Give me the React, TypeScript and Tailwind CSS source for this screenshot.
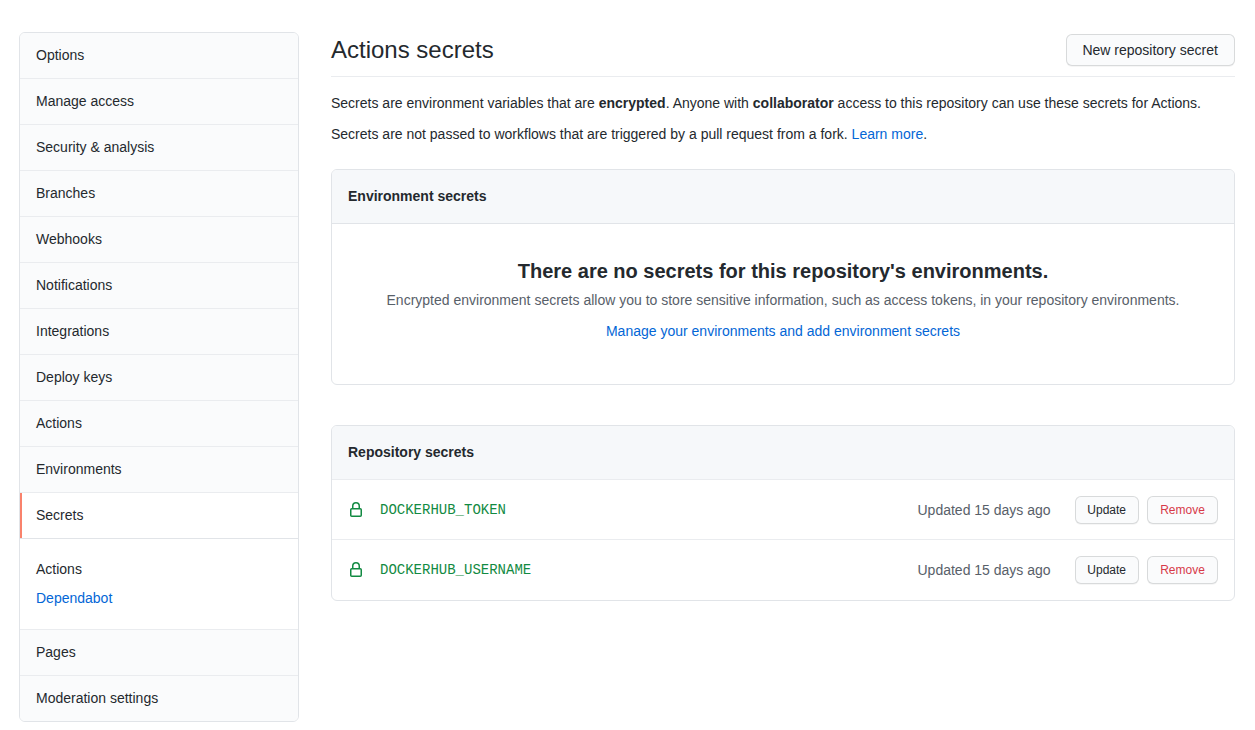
import React from "react";

const before = ["Options", "Manage access", "Security & analysis", "Branches", "Webhooks", "Notifications", "Integrations", "Deploy keys", "Actions", "Environments"];
const after = ["Pages", "Moderation settings"];
const secrets = ["DOCKERHUB_TOKEN", "DOCKERHUB_USERNAME"];

function MenuItem({ label }: { label: string }) {
  return (
    <a className="block h-[46px] border-b border-[#eaecef] bg-[#fafbfc] px-4 py-3 leading-[21px] last:h-[45px] last:border-b-0">{label}</a>
  );
}

function LockIcon() {
  return (
    <svg className="h-4 w-4 shrink-0 fill-[#128a42]" viewBox="0 0 16 16" aria-hidden="true">
      <path fillRule="evenodd" d="M4 4v2h-.25A1.75 1.75 0 002 7.75v5.5c0 .966.784 1.75 1.75 1.75h8.5A1.75 1.75 0 0014 13.25v-5.5A1.75 1.75 0 0012.25 6H12V4a4 4 0 10-8 0zm6.5 2V4a2.5 2.5 0 10-5 0v2h5zM12 7.5h.25a.25.25 0 01.25.25v5.5a.25.25 0 01-.25.25h-8.5a.25.25 0 01-.25-.25v-5.5a.25.25 0 01.25-.25H12z" />
    </svg>
  );
}

function SecretRow({ name }: { name: string }) {
  return (
    <li className="flex h-[60px] items-start border-t border-[#eaecef] px-4 pt-4 last:h-[61px]">
      <div className="flex h-7 items-center"><LockIcon /></div>
      <code className="ml-4 flex-1 pt-[3px] font-['Liberation_Mono',monospace] text-[14px] leading-[22px] text-[#128a42]">{name}</code>
      <span className="mr-[24.4px] pt-[4px] text-[14px] leading-[21px] text-[#586069]">Updated 15 days ago</span>
      <button className="mr-2 h-7 w-16 rounded-md border border-[#1b1f23]/15 bg-[#fafbfc] pr-[0.7px] text-xs shadow-[0_1px_0_rgba(27,31,35,0.04)]">Update</button>
      <button className="h-7 w-[71px] rounded-md border border-[#1b1f23]/15 bg-[#fafbfc] text-xs text-[#d73a49] shadow-[0_1px_0_rgba(27,31,35,0.04)]">Remove</button>
    </li>
  );
}

export default function App() {
  return (
    <div className="flex h-[730px] items-start gap-8 overflow-hidden bg-white pt-8 pr-5 pl-[19px] font-['Liberation_Sans',Arial,sans-serif] text-[14px] leading-[21px] text-[#24292e]">
      <nav className="w-[280px] shrink-0 overflow-hidden rounded-md border border-[#e1e4e8]">
        {before.map((label) => <MenuItem key={label} label={label} />)}
        <a className="flex h-[45px] bg-white"><span className="w-0.5 bg-[#f9826c]" /><span className="py-3 pl-[14px]">Secrets</span></a>
        <div className="h-[92px] border-y border-t-[#e1e4e8] border-b-[#eaecef] px-4 pt-5">
          <a className="mb-2 block">Actions</a>
          <a className="block text-[#0366d6]">Dependabot</a>
        </div>
        {after.map((label) => <MenuItem key={label} label={label} />)}
      </nav>
      <main className="min-w-0 flex-1">
        <header className="flex h-[45px] items-start justify-between border-b border-[#eaecef]">
          <h2 className="text-2xl leading-9">Actions secrets</h2>
          <button className="mt-[2px] h-8 w-[169px] rounded-md border border-[#1b1f23]/15 bg-[#fafbfc] pr-[0.7px] shadow-[0_1px_0_rgba(27,31,35,0.04)]">New repository secret</button>
        </header>
        <p className="mt-4">Secrets are environment variables that are <strong>encrypted</strong>. Anyone with <strong>collaborator</strong> access to this repository can use these secrets for Actions.</p>
        <p className="mt-[10px]">Secrets are not passed to workflows that are triggered by a pull request from a fork. <a className="text-[#0366d6]">Learn more</a>.</p>
        <section className="mt-6 h-[216px] overflow-hidden rounded-md border border-[#e1e4e8]">
          <h3 className="h-[54px] border-b border-[#e1e4e8] bg-[#f6f8fa] p-4 font-bold">Environment secrets</h3>
          <div className="pt-8 text-center">
            <h3 className="text-xl leading-[30px] font-bold">There are no secrets for this repository's environments.</h3>
            <p className="mt-1 text-[#586069]">Encrypted environment secrets allow you to store sensitive information, such as access tokens, in your repository environments.</p>
            <a className="mt-[10px] block text-[#0366d6]">Manage your environments and add environment secrets</a>
          </div>
        </section>
        <section className="mt-10 overflow-hidden rounded-md border border-[#e1e4e8]">
          <h3 className="h-[53px] bg-[#f6f8fa] p-4 font-bold">Repository secrets</h3>
          <ul>{secrets.map((name) => <SecretRow key={name} name={name} />)}</ul>
        </section>
      </main>
    </div>
  );
}
